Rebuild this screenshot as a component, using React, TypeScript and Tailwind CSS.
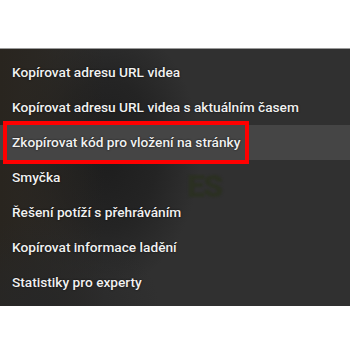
import React from "react";

const items = [
  "Kopírovat adresu URL videa",
  "Kopírovat adresu URL videa s aktuálním časem",
  "Zkopírovat kód pro vložení na stránky",
  "Smyčka",
  "Řešení potíží s přehráváním",
  "Kopírovat informace ladění",
  "Statistiky pro experty",
];

export default function App() {
  return (
    <div className="w-[350px] h-[350px] bg-white overflow-hidden" style={{ fontFamily: "Roboto, 'Noto Sans', sans-serif" }}>
      <div className="h-[48px]" />
      <div className="relative h-[258px] border-t border-[#9a9a9a] bg-[#303030] overflow-hidden">
        {/* blurred background image hints */}
        <div className="absolute inset-0 bg-[radial-gradient(ellipse_95px_135px_at_105px_105px,#1d1d1d_0%,#242424_55%,transparent_100%)]" />
        <div className="absolute inset-0 bg-[linear-gradient(90deg,#29251f_0%,rgba(40,36,30,0.7)_12%,transparent_30%)]" />
        <div className="absolute inset-0 bg-[radial-gradient(ellipse_120px_90px_at_40px_260px,#272727_0%,transparent_100%)]" />
        <div className="absolute left-[187px] top-[121px] text-[32px] leading-none font-black text-[#2b3022] tracking-tighter blur-[0.8px] select-none">
          ES
        </div>
        <div className="relative flex flex-col pt-[6px]">
          {items.map((t, i) => (
            <div
              key={i}
              className={`relative h-[35px] flex items-center pl-[12px] text-[13.7px] font-medium text-[#f1f1f1] whitespace-nowrap [text-shadow:0_0_2px_rgba(0,0,0,0.8)] ${
                i === 2 ? "bg-[#454545]" : ""
              }`}
            >
              {t}
              {i === 2 && (
                <div className="absolute left-[3px] top-[-4px] w-[246px] h-[43px] border-[4px] border-[#ff0000]" />
              )}
            </div>
          ))}
        </div>
      </div>
    </div>
  );
}
